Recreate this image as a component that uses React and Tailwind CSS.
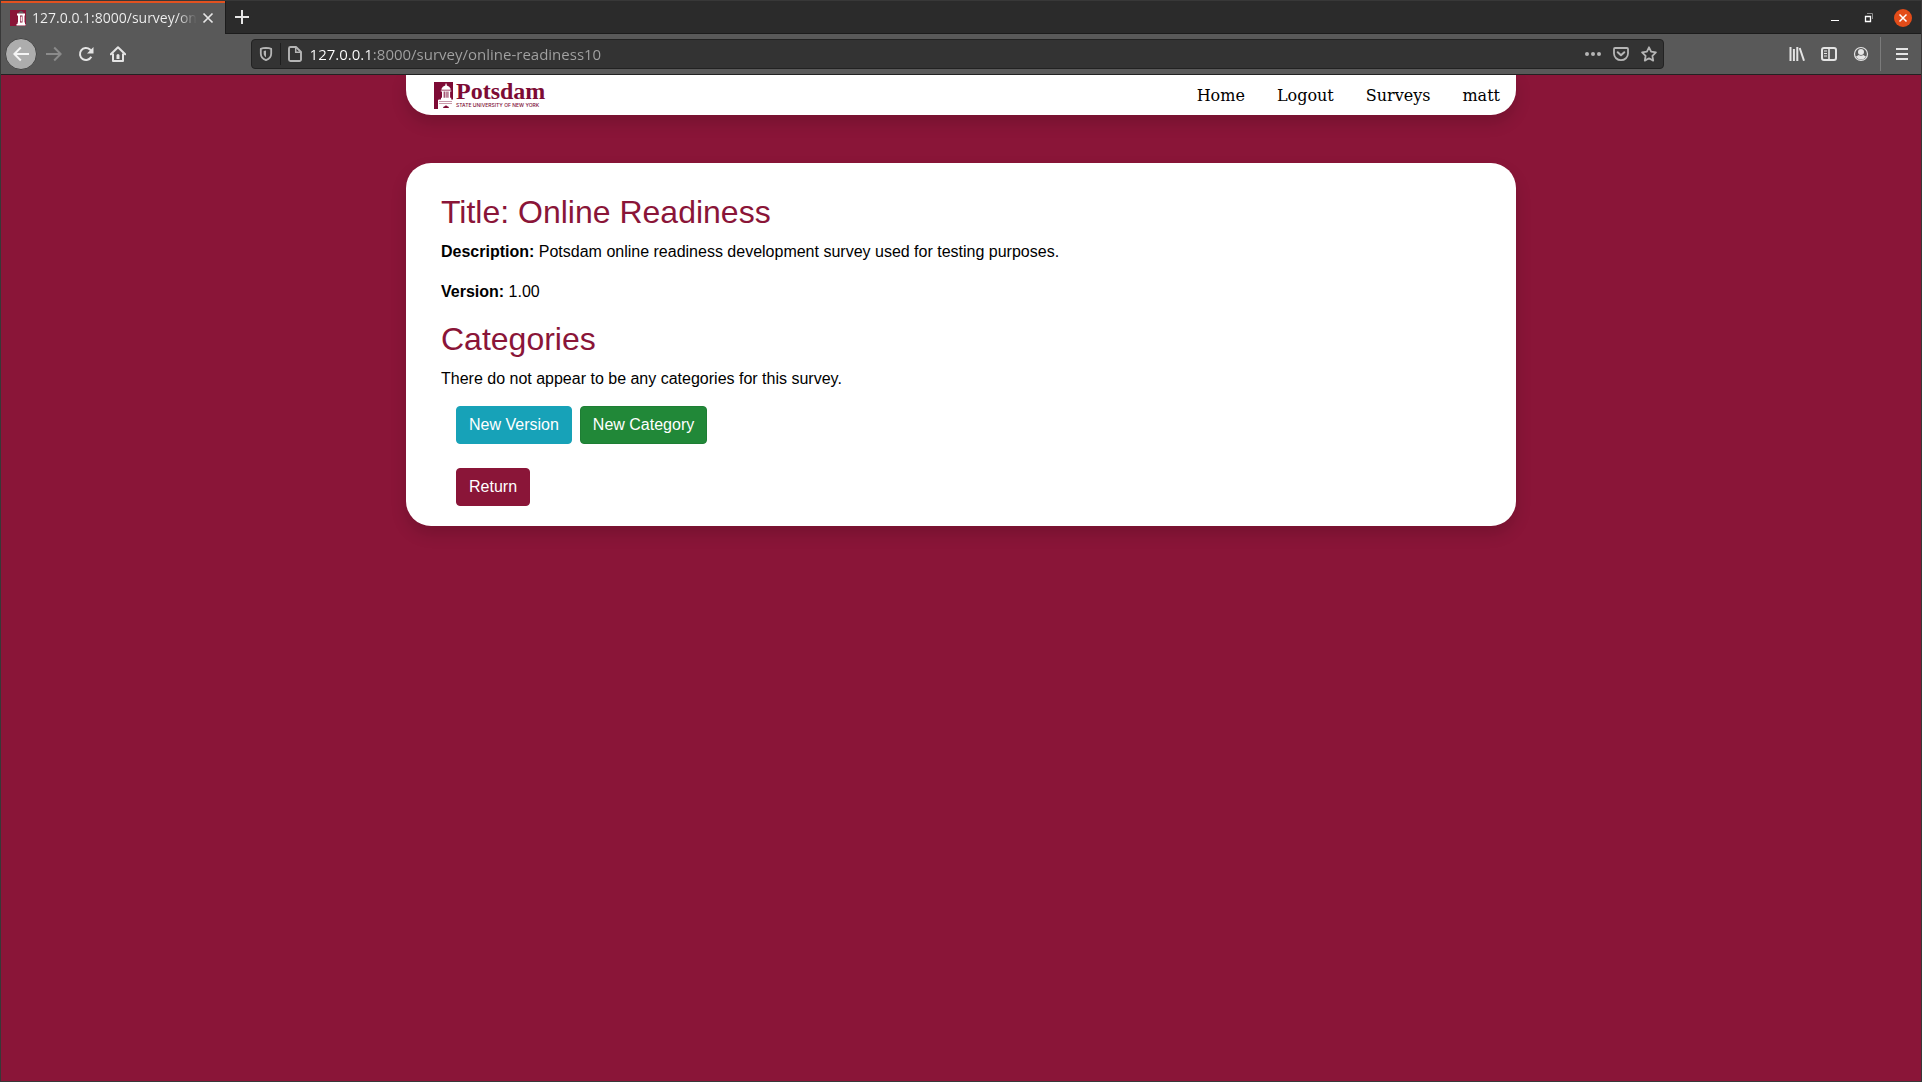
import React from "react";

const chromeFont = "font-['Open_Sans','Noto_Sans',sans-serif]";

function Icon({ size = 16, children, className = "", box = 16 }) {
  return (
    <svg
      width={size}
      height={size}
      viewBox={`0 0 ${box} ${box}`}
      fill="none"
      stroke="currentColor"
      strokeWidth="2"
      className={`block shrink-0 ${className}`}
      aria-hidden="true"
    >
      {children}
    </svg>
  );
}

function Favicon() {
  return (
    <svg width="16" height="16" viewBox="0 0 16 16" className="block shrink-0" aria-hidden="true">
      <rect width="16" height="16" fill="#8a1538" />
      <path d="M8 3.500Q8.500 2 11 .8 Q13.500 2 14 3.500z" fill="#5f5f5f" />
      <path
        d="M7 3.500h8v2H7zM8 5.500h2v7H8zM12.500 5.500h2v7h-2zM10.600 6.500h1.300v5h-1.300zM7.500 12.500h7.500v1.500H7.500zM6.500 14h9v1.500h-9z"
        fill="#fff"
      />
    </svg>
  );
}

function TabStrip() {
  return (
    <header className="flex h-[33px] items-stretch bg-[#2b2b2b] text-[#e6e6e6]">
      <div className="flex w-56 shrink-0 items-center border-t-2 border-[#e2511f] bg-[#595959] pb-[2px] pl-[9px]">
        <Favicon />
        <button
          type="button"
          className="ml-[6px] w-[165px] overflow-hidden bg-linear-to-r from-[#f2f2f2] from-[145px] to-transparent to-[165px] bg-clip-text text-left text-[14px] leading-5 whitespace-nowrap text-transparent"
        >
          127.0.0.1:8000/survey/online-readiness10
        </button>
        <button type="button" aria-label="Close tab" className="ml-[3px]">
          <Icon size={16}>
            <path d="M3.500 3.500l9 9M12.500 3.500l-9 9" strokeWidth="1.700" />
          </Icon>
        </button>
      </div>
      <button
        type="button"
        aria-label="New tab"
        className="flex w-[33px] items-center justify-center border-b border-l border-[#1c1c1c]"
      >
        <Icon size={16}>
          <path d="M8 1v14M1 8h14" strokeWidth="2" />
        </Icon>
      </button>
      <div className="flex flex-1 items-center justify-end gap-4 border-b border-[#1c1c1c] pt-[2px] pr-[9px] text-white">
        <button type="button" aria-label="Minimize" className="flex size-[18px] items-center justify-center">
          <Icon size={12} box={12}>
            <path d="M2 8.500h8" strokeWidth="1" />
          </Icon>
        </button>
        <button type="button" aria-label="Restore" className="flex size-[18px] items-center justify-center">
          <Icon size={12} box={12}>
            <path d="M2.500 4.500h5v5h-5z" strokeWidth="1.300" />
            <path d="M4 1.500h5.500v5.500" strokeWidth="1" stroke="#8c8c8c" />
          </Icon>
        </button>
        <button
          type="button"
          aria-label="Close window"
          className="flex size-[18px] items-center justify-center rounded-full bg-[#e34c19]"
        >
          <Icon size={10} box={10}>
            <path d="M1.500 1.500l7 7M8.500 1.500l-7 7" strokeWidth="1.500" />
          </Icon>
        </button>
      </div>
    </header>
  );
}

function AddressBar() {
  return (
    <div className="flex h-[30px] min-w-0 flex-[34] items-center rounded border border-[#222] bg-[#333] text-[#b5b5b5]">
      <button type="button" aria-label="Tracking protection" className="pl-[6px]">
        <Icon size={16}>
          <path
            d="M8 1.900C6 2 4 2.400 2.800 2.900V7.500c0 3 2 5.500 5.200 6.700 3.200-1.200 5.200-3.700 5.200-6.700V2.900C12 2.400 10 2 8 1.900z"
            strokeWidth="1.800"
            strokeLinejoin="round"
          />
          <path d="M8 4.500v6.800C6.400 10.300 5.700 9 5.700 7.500V4.900z" fill="currentColor" stroke="none" />
        </Icon>
      </button>
      <span className="ml-[6px] h-[22px] w-px bg-[#1e1e1e]" />
      <button type="button" aria-label="Site information" className="pl-[6px]">
        <Icon size={16}>
          <path
            d="M3.500 1H9l5 5v7.500a1.500 1.500 0 0 1-1.500 1.500h-9A1.500 1.500 0 0 1 2 13.500v-11A1.500 1.500 0 0 1 3.500 1z"
            strokeWidth="1.900"
            strokeLinejoin="round"
          />
          <path d="M8.700 1v5.300H14" strokeWidth="1.500" />
        </Icon>
      </button>
      <input
        type="text"
        aria-label="Address"
        defaultValue="127.0.0.1:8000/survey/online-readiness10"
        className="ml-[7px] min-w-0 flex-1 bg-linear-to-r from-white from-[63px] to-[#a3a3a3] to-[63px] bg-clip-text text-[15px] leading-5 text-transparent outline-none"
      />
      <div className="flex items-center gap-3 pr-[6px]">
        <button type="button" aria-label="Page actions">
          <Icon size={16}>
            <g fill="currentColor" stroke="none">
              <circle cx="2" cy="8" r="2" />
              <circle cx="8" cy="8" r="2" />
              <circle cx="14" cy="8" r="2" />
            </g>
          </Icon>
        </button>
        <button type="button" aria-label="Save to Pocket">
          <Icon size={16}>
            <path d="M2 2h12a1 1 0 0 1 1 1v4.500a7 6.700 0 0 1-14 0V3a1 1 0 0 1 1-1z" strokeWidth="1.800" />
            <path
              d="M4.700 6.200L8 9.300l3.300-3.100"
              strokeWidth="2"
              strokeLinecap="round"
              strokeLinejoin="round"
            />
          </Icon>
        </button>
        <button type="button" aria-label="Bookmark this page">
          <Icon size={16}>
            <path
              d="M8 1.300l2.100 4.400 4.800.7-3.500 3.400.8 4.800L8 12.300l-4.200 2.300.8-4.800L1.100 6.400l4.800-.7z"
              strokeWidth="1.800"
              strokeLinejoin="round"
            />
          </Icon>
        </button>
      </div>
    </div>
  );
}

function Toolbar() {
  return (
    <div className="flex h-[41px] items-center border-b border-[#222] bg-[#595959] pr-3 pl-1 text-[#e4e4e4]">
      <button
        type="button"
        aria-label="Back"
        className="flex size-8 shrink-0 items-center justify-center rounded-full border border-[#444] bg-[#adadad] text-[#f4f4f4]"
      >
        <Icon>
          <path d="M16 8H1.500M7.800 1.500L1.300 8l6.500 6.500" strokeWidth="2" />
        </Icon>
      </button>
      <button type="button" aria-label="Forward" disabled className="ml-[9px] text-[#8b8b8b]">
        <Icon>
          <path d="M0 8h14.500M8.200 1.500L14.700 8l-6.500 6.500" strokeWidth="2" />
        </Icon>
      </button>
      <button type="button" aria-label="Reload" className="ml-4">
        <Icon>
          <path d="M13.300 10.800A6 6 0 1 1 12 3.600l1 1" strokeWidth="2" />
          <path d="M15.500 1v6.500H9z" fill="currentColor" stroke="none" />
        </Icon>
      </button>
      <button type="button" aria-label="Home" className="ml-4">
        <Icon>
          <path d="M.8 8.300L8 1.300l7.200 7" strokeWidth="2" strokeLinejoin="round" strokeLinecap="round" />
          <path d="M3 7.500V15h10V7.500" strokeWidth="2" strokeLinejoin="round" />
          <path
            d="M6.500 9.500A1.500 1.500 0 0 1 8 8a1.500 1.500 0 0 1 1.500 1.500V13h-3z"
            fill="currentColor"
            stroke="none"
          />
        </Icon>
      </button>
      <span className="flex-[3]" />
      <AddressBar />
      <span className="flex-[3]" />
      <div className="flex items-center gap-4">
        <button type="button" aria-label="Library">
          <Icon>
            <path d="M1.500 1v14M4.900 3v12M8.300 1v14" strokeWidth="2" />
            <path d="M10.700 2l4.300 12.700" strokeWidth="2" />
          </Icon>
        </button>
        <button type="button" aria-label="Sidebars">
          <Icon>
            <rect x="1" y="2" width="14" height="12" rx="2" strokeWidth="2" />
            <path d="M8 2v12" strokeWidth="1.600" />
            <path d="M3 5h3M3 7.500h3M3 10h3" strokeWidth="1.200" />
          </Icon>
        </button>
        <button type="button" aria-label="Account">
          <Icon>
            <circle cx="8" cy="8" r="6.500" strokeWidth="1.200" />
            <circle cx="8" cy="6" r="3" fill="currentColor" stroke="none" />
            <path
              d="M3 10.500q1.700-.8 2.700-1.500 2.300 1.500 4.600 0 1 .7 2.700 1.500A5.600 5.600 0 0 1 3 10.500z"
              fill="currentColor"
              stroke="none"
            />
          </Icon>
        </button>
      </div>
      <span className="ml-[11px] h-[34px] w-px bg-[#7b7b7b]" />
      <button type="button" aria-label="Open menu" className="ml-[14px]">
        <Icon size={14} box={14}>
          <path d="M1 2h12M1 7h12M1 12h12" strokeWidth="2" />
        </Icon>
      </button>
    </div>
  );
}

function Logo() {
  return (
    <a href="#home" aria-label="Potsdam home" className="flex items-center gap-[3px] text-[#7d0b35]">
      <svg width="19" height="27" viewBox="0 0 19 27" className="block" aria-hidden="true">
        <path d="M0 0h19v18H4v9H0z" fill="currentColor" />
        <path d="M17.500 18H19v9h-1.500z" fill="currentColor" />
        <g fill="#fff">
          <path d="M11.600 1.500h.9l.3 2q3 .8 3.800 3.200v1.100H7.500V6.700q.8-2.400 3.800-3.200z" />
          <path d="M6.800 8.400h10.500v1.100H6.800zM8 9.500h1.700v6.500H8zM10.700 9.500h1v6.500h-1zM12.500 9.500h1v6.500h-1zM14.400 9.500h1.700v6.500h-1.700z" />
          <path d="M7 15.800h10.200V18H7zM4.500 17.500H19V27H4.500z" />
        </g>
        <path d="M5 19.500h13M5 21.500h13" stroke="currentColor" strokeWidth=".7" opacity=".6" />
        <path d="M9 26q.2-1.700 1.700-1.800l1.300-.9 1.300.9q1.500.1 1.700 1.800z" fill="currentColor" />
      </svg>
      <span className="flex flex-col whitespace-nowrap">
        <span className="font-['Liberation_Serif',serif] text-[24px] leading-5 font-bold">Potsdam</span>
        <span className="font-['Inter',sans-serif] text-[5px] leading-2 font-medium">
          STATE UNIVERSITY OF NEW YORK
        </span>
      </span>
    </a>
  );
}

const links = ["Home", "Logout", "Surveys", "matt"];

function SiteNav() {
  return (
    <nav className="flex h-10 items-center justify-between rounded-b-[25px] bg-white pl-7 shadow-[0_8px_16px_rgba(0,0,0,0.15)]">
      <Logo />
      <ul className="flex pt-px font-['DejaVu_Serif',serif] text-[16px] leading-6 text-black">
        {links.map((label) => (
          <li key={label}>
            <a href={`#${label.toLowerCase()}`} className="block px-4">
              {label}
            </a>
          </li>
        ))}
      </ul>
    </nav>
  );
}

function SurveyCard() {
  return (
    <main className="mt-12 rounded-[25px] bg-white px-[35px] pt-[30px] pb-5 text-[16px] leading-6 text-black shadow-[0_8px_16px_rgba(0,0,0,0.15)]">
      <h2 className="mb-2 text-[32px] leading-[39px] text-[#8a1538]">Title: Online Readiness</h2>
      <p className="mb-4">
        <b>Description:</b> Potsdam online readiness development survey used for testing purposes.
      </p>
      <p className="mb-4">
        <b>Version:</b> 1.00
      </p>
      <h2 className="mb-2 text-[32px] leading-[39px] text-[#8a1538]">Categories</h2>
      <p className="mb-[15px]">There do not appear to be any categories for this survey.</p>
      <div className="flex flex-col gap-6 pl-[15px] text-white">
        <div className="flex gap-2">
          <button type="button" className="rounded border border-[#17a2b8] bg-[#17a2b8] px-3 py-[6px]">
            New Version
          </button>
          <button type="button" className="rounded border border-[#1e7e34] bg-[#218838] px-3 py-[6px]">
            New Category
          </button>
        </div>
        <div className="flex">
          <button type="button" className="rounded border border-[#8a1538] bg-[#8a1538] px-3 py-[6px]">
            Return
          </button>
        </div>
      </div>
    </main>
  );
}

export default function App() {
  return (
    <div className="flex min-h-screen flex-col border border-[#383838] bg-[#8a1538]">
      <div className={chromeFont}>
        <TabStrip />
        <Toolbar />
      </div>
      <div className="flex-1 overflow-hidden font-['Liberation_Sans',Arial,sans-serif]">
        <div className="mx-auto max-w-[1110px]">
          <SiteNav />
          <SurveyCard />
        </div>
      </div>
    </div>
  );
}
